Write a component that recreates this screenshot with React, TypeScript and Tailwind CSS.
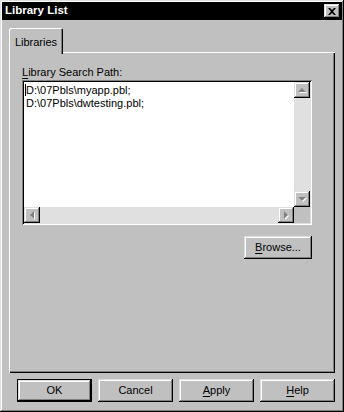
import React from 'react';

const raised =
  'shadow-[inset_-1px_-1px_#000,inset_1px_1px_#dfdfdf,inset_-2px_-2px_#808080,inset_2px_2px_#fff]';

const Btn = ({ label, accel, def }: { label: string; accel?: number; def?: boolean }) => (
  <div className={`w-[75px] h-[23px] ${def ? 'border border-black' : ''}`}>
    <div className={`w-full h-full flex items-center justify-center bg-[#c0c0c0] ${raised}`}>
      <span>
        {accel === undefined ? label : (
          <>
            {label.slice(0, accel)}
            <span className="underline underline-offset-2">{label[accel]}</span>
            {label.slice(accel + 1)}
          </>
        )}
      </span>
    </div>
  </div>
);

const Arrow = ({ dir }: { dir: 'up' | 'down' | 'left' | 'right' }) => {
  const pts = {
    up: '4,10 8,6 12,10',
    down: '4,6 8,10 12,6',
    left: '10,4 6,8 10,12',
    right: '6,4 10,8 6,12',
  }[dir];
  return (
    <div className={`w-[16px] h-[16px] bg-[#c0c0c0] shrink-0 ${raised}`}>
      <svg width="16" height="16" viewBox="0 0 16 16">
        <polygon points={pts} fill="#fff" transform="translate(1,1)" />
        <polygon points={pts} fill="#808080" />
      </svg>
    </div>
  );
};

export default function App() {
  return (
    <div
      className="w-[344px] h-[412px] bg-[#c0c0c0] p-[2px] flex flex-col text-[11px] text-black shadow-[inset_-1px_-1px_#000,inset_1px_1px_#dfdfdf,inset_-2px_-2px_#808080,inset_2px_2px_#fff]"
      style={{ fontFamily: '"Liberation Sans", Arial, sans-serif' }}
    >
      {/* title bar */}
      <div className="h-[18px] bg-black flex items-center justify-between pl-[3px] pr-[2px]">
        <span className="text-white font-bold text-[11.5px] leading-none">Library List</span>
        <div className={`w-[16px] h-[14px] bg-[#c0c0c0] flex items-center justify-center ${raised}`}>
          <svg width="8" height="7" viewBox="0 0 8 7">
            <path d="M0 0h2l2 2 2-2h2L5 3.5 8 7H6L4 5 2 7H0l3-3.5z" fill="#000" />
          </svg>
        </div>
      </div>

      <div className="flex flex-col px-[7px] pt-[8px]">
        {/* tab */}
        <div className="flex">
          <div className="relative z-10 -mb-[2px] h-[26px] w-[54px] bg-[#c0c0c0] rounded-tl-[2px] rounded-tr-[2px] shadow-[inset_1px_1px_#fff,inset_-1px_0_#000,inset_-2px_0_#808080] flex items-start justify-center pt-[6px]">
            <span className="text-[11px]">Libraries</span>
          </div>
        </div>

        {/* panel */}
        <div className="h-[321px] w-[326px] bg-[#c0c0c0] shadow-[inset_1px_1px_#fff,inset_-1px_-1px_#000,inset_-2px_-2px_#808080] pl-[13px] pr-[23px] pt-[14px] flex flex-col">
          <div className="h-[14px] leading-[13px]">
            <span className="underline underline-offset-2">L</span>ibrary Search Path:
          </div>
          {/* listbox */}
          <div className="h-[145px] w-[290px] bg-white shadow-[inset_1px_1px_#808080,inset_-1px_-1px_#fff,inset_2px_2px_#000,inset_-2px_-2px_#dfdfdf] p-[2px] flex flex-col">
            <div className="flex flex-1 min-h-0">
              <div className="flex-1 pl-[1px] pt-[2px] leading-[13px]">
                <div className="flex">
                  <span className="w-[1px] h-[12px] bg-black" />
                  <span>D:\07Pbls\myapp.pbl;</span>
                </div>
                <div className="pl-[1px]">D:\07Pbls\dwtesting.pbl;</div>
              </div>
              <div className="w-[16px] flex flex-col bg-[#e0e0e0]">
                <Arrow dir="up" />
                <div className="flex-1" />
                <Arrow dir="down" />
              </div>
            </div>
            <div className="h-[16px] flex">
              <div className="flex-1 flex bg-[#e0e0e0]">
                <Arrow dir="left" />
                <div className="flex-1" />
                <Arrow dir="right" />
              </div>
              <div className="w-[16px] bg-[#c0c0c0]" />
            </div>
          </div>
          <div className="flex justify-end mt-[11px]">
            <div className="w-[68px] h-[23px]">
              <div className={`w-full h-full flex items-center justify-center ${raised}`}>
                <span>
                  <span className="underline underline-offset-2">B</span>rowse...
                </span>
              </div>
            </div>
          </div>
        </div>

        {/* bottom buttons */}
        <div className="flex gap-[6px] mt-[6px] pl-[8px]">
          <Btn label="OK" def />
          <Btn label="Cancel" />
          <Btn label="Apply" accel={0} />
          <Btn label="Help" accel={0} />
        </div>
      </div>
    </div>
  );
}
